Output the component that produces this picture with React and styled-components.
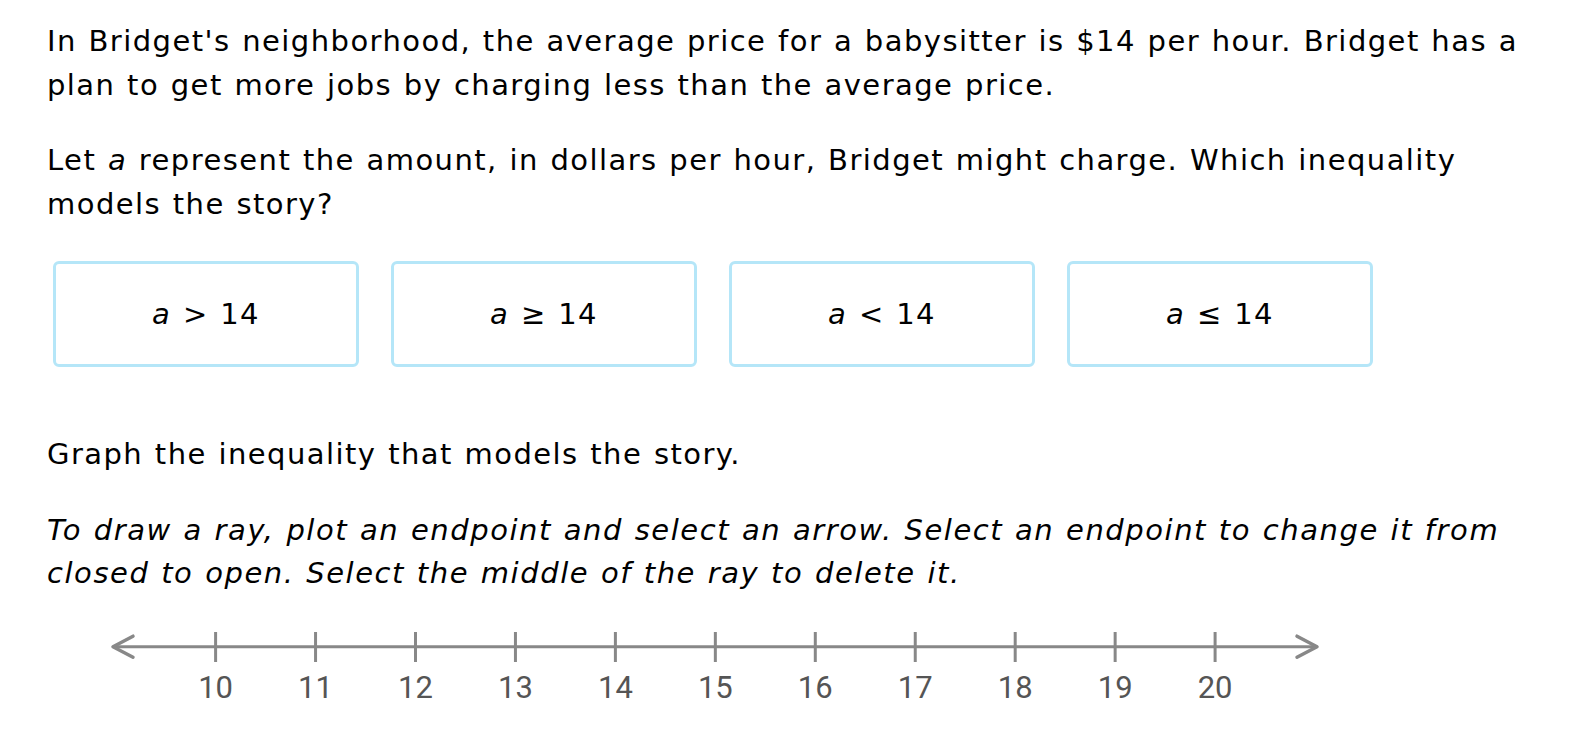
import React from 'react';
import styled, { createGlobalStyle } from 'styled-components';

const GlobalStyle = createGlobalStyle`
  html, body {
    margin: 0;
    padding: 0;
    background: #ffffff;
  }
  body {
    font-family: "DejaVu Sans", Verdana, sans-serif;
    color: #000000;
  }
`;

const Page = styled.div`
  padding: 20px 0 0 47px;
  width: 1580px;
  box-sizing: border-box;
`;

const Paragraph = styled.p`
  margin: ${(props) => props.top || 0}px 0 0 0;
  font-size: 29px;
  line-height: 43.5px;
  letter-spacing: ${(props) => (props.italic ? 1.55 : 1.45)}px;
  word-spacing: 1px;
  white-space: nowrap;
  font-style: ${(props) => (props.italic ? 'italic' : 'normal')};
`;

const Var = styled.i`
  font-style: italic;
`;

const ChoiceRow = styled.div`
  display: flex;
  gap: 32px;
  margin: 35px 0 0 6px;
`;

const Choice = styled.button`
  width: 306px;
  height: 106px;
  box-sizing: border-box;
  border: 3px solid #b5e6f8;
  border-radius: 6px;
  background: #ffffff;
  display: flex;
  align-items: center;
  justify-content: center;
  font-family: "DejaVu Sans", Verdana, sans-serif;
  font-size: 29px;
  letter-spacing: 1.4px;
  word-spacing: 1px;
  color: #000000;
  padding: 0;
  cursor: pointer;
`;

const NumberLineWrap = styled.div`
  margin-top: 5px;
`;

const ticks = [10, 11, 12, 13, 14, 15, 16, 17, 18, 19, 20];

function NumberLine() {
  const start = 168.6;
  const step = 99.95;
  const y = 45.7;
  return (
    <svg width="1300" height="120" viewBox="0 0 1300 120">
      <line x1="67" y1={y} x2="1268" y2={y} stroke="#888888" strokeWidth="3" />
      <polyline
        points={`86,${y - 10.5} 66,${y} 86,${y + 10.5}`}
        fill="none"
        stroke="#888888"
        strokeWidth="3.5"
        strokeLinecap="round"
        strokeLinejoin="round"
      />
      <polyline
        points={`1250,${y - 10.5} 1270,${y} 1250,${y + 10.5}`}
        fill="none"
        stroke="#888888"
        strokeWidth="3.5"
        strokeLinecap="round"
        strokeLinejoin="round"
      />
      {ticks.map((t, i) => {
        const x = start + i * step;
        return (
          <g key={t}>
            <line x1={x} y1="31" x2={x} y2="61" stroke="#888888" strokeWidth="3" />
            <text
              x={x}
              y="97"
              textAnchor="middle"
              fontFamily="Roboto, sans-serif"
              fontSize="31"
              fill="#555555"
            >
              {t}
            </text>
          </g>
        );
      })}
    </svg>
  );
}

const choices = ['>', '≥', '<', '≤'];

export default function App() {
  return (
    <>
      <GlobalStyle />
      <Page>
        <Paragraph>
          In Bridget's neighborhood, the average price for a babysitter is $14 per hour. Bridget has a
          <br />
          plan to get more jobs by charging less than the average price.
        </Paragraph>
        <Paragraph top={32}>
          Let <Var>a</Var> represent the amount, in dollars per hour, Bridget might charge. Which inequality
          <br />
          models the story?
        </Paragraph>
        <ChoiceRow>
          {choices.map((c) => (
            <Choice key={c}>
              <Var>a</Var>&nbsp;{c} 14
            </Choice>
          ))}
        </ChoiceRow>
        <Paragraph top={66}>Graph the inequality that models the story.</Paragraph>
        <Paragraph top={32} italic>
          To draw a ray, plot an endpoint and select an arrow. Select an endpoint to change it from
          <br />
          closed to open. Select the middle of the ray to delete it.
        </Paragraph>
        <NumberLineWrap>
          <NumberLine />
        </NumberLineWrap>
      </Page>
    </>
  );
}
